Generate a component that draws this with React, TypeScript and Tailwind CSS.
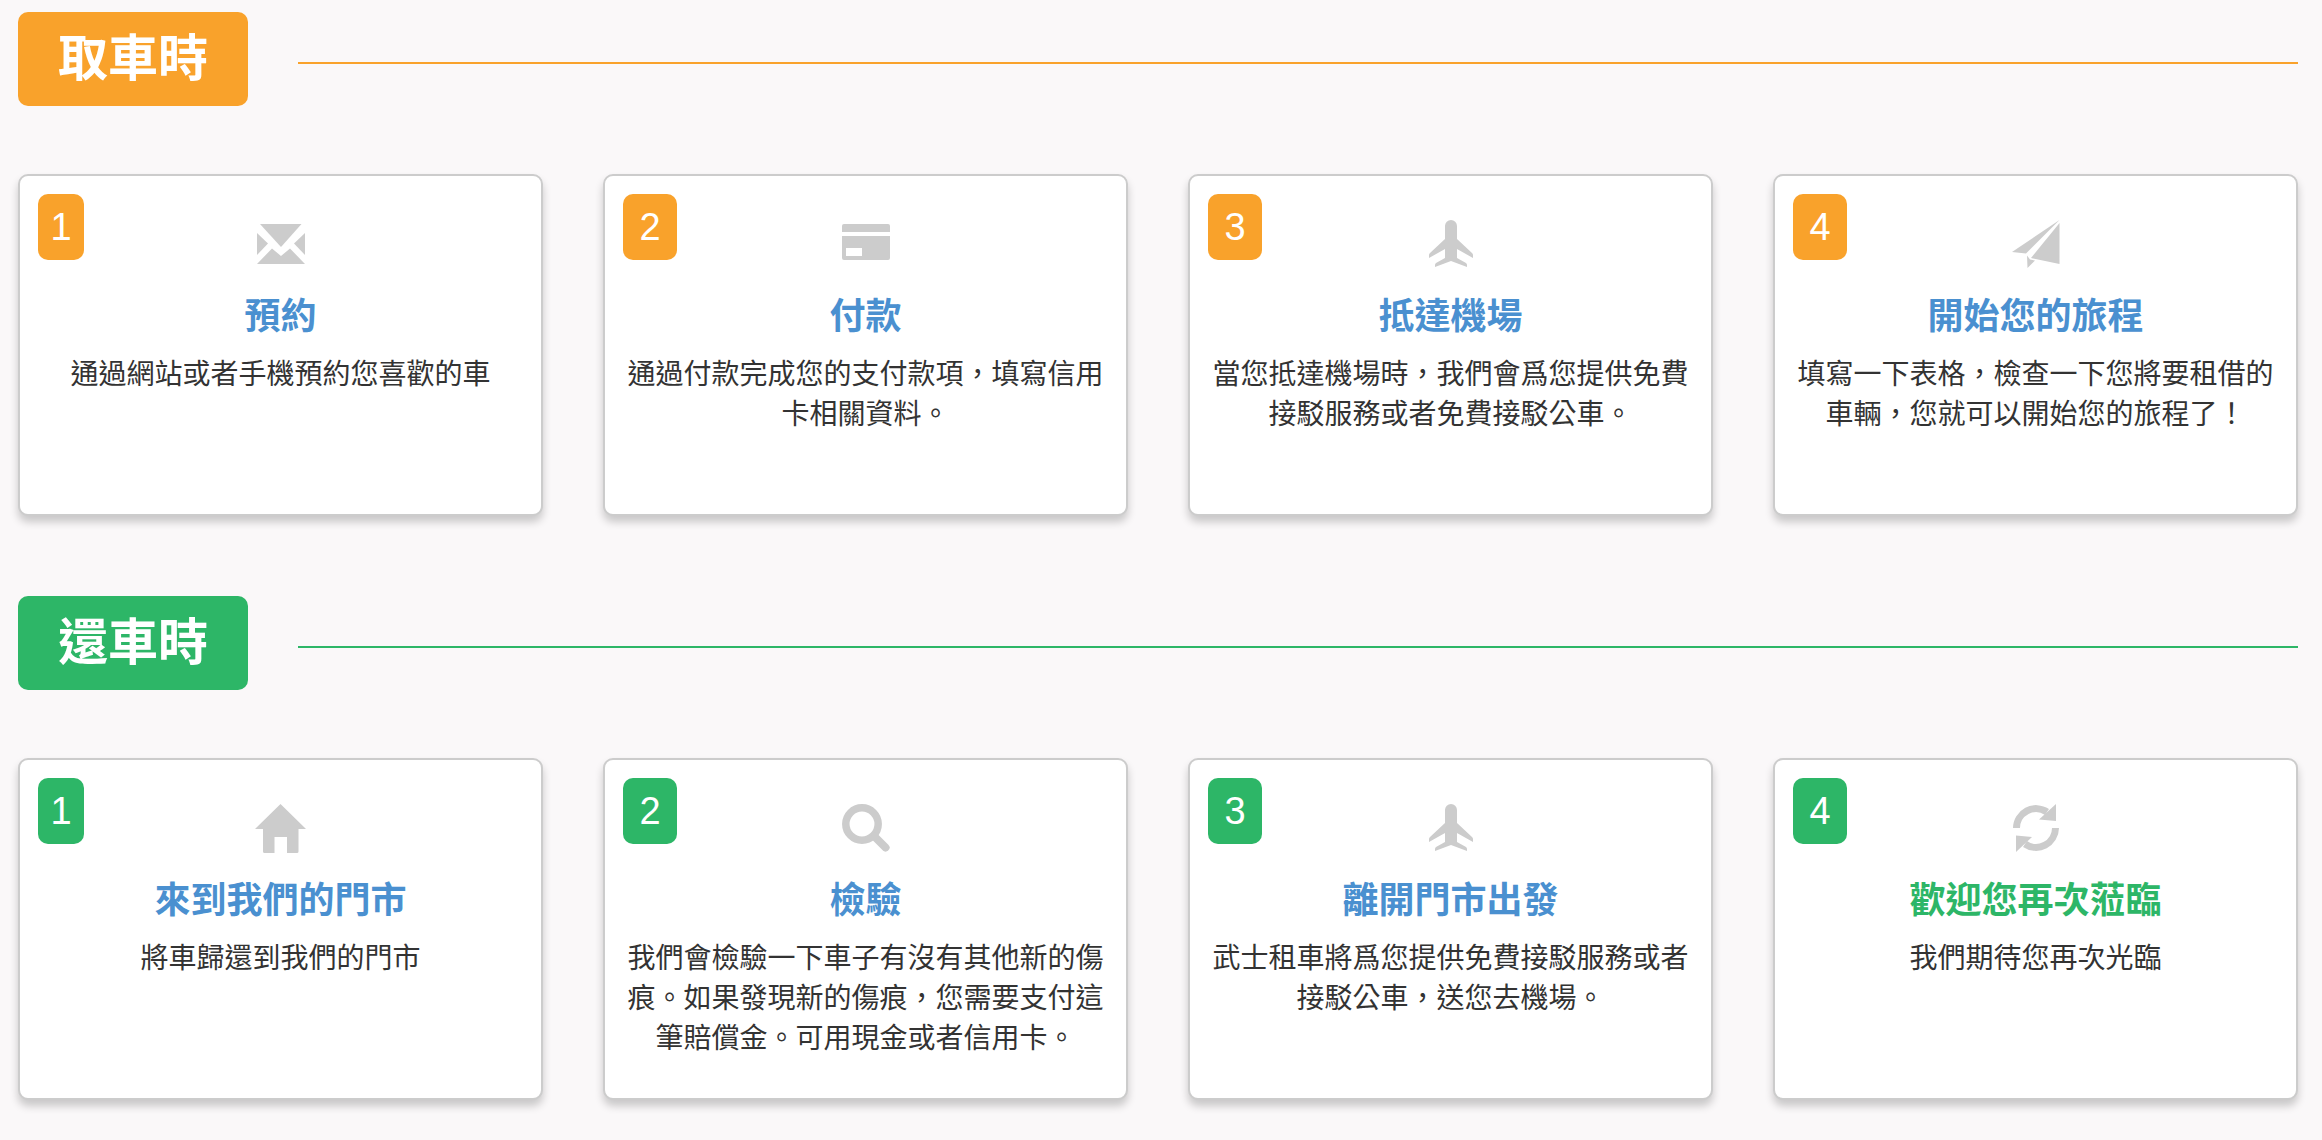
const font = { fontFamily: '"Liberation Sans", "Noto Sans CJK TC", sans-serif' };

const Envelope = () => (
  <svg width="48" height="48" viewBox="0 0 48 48" fill="#cccccc">
    <polygon points="3,4 44.5,4 24,27" />
    <polygon points="0,13 11,23.5 0,35" />
    <polygon points="48,13 37,23.5 48,35" />
    <polygon points="0,44 15,28.5 24,36 33,28.5 48,44" />
  </svg>
);
const CardIcon = () => (
  <svg width="48" height="48" viewBox="0 0 48 48" fill="#cccccc">
    <path d="M2 4h44a2 2 0 0 1 2 2v6H0V6a2 2 0 0 1 2-2z" />
    <path fillRule="evenodd" d="M0 16h48v22a2 2 0 0 1-2 2H2a2 2 0 0 1-2-2zM4 28v8h16v-8z" />
  </svg>
);
const Plane = () => (
  <svg width="44" height="48" viewBox="0 0 44 48" fill="#cccccc">
    <path d="M16 6a6 6 0 0 1 12 0V19L43 33Q44 34 44 35V38L28 29V38L37 43Q38 44 38 45V47L22 41L6 47V45Q6 44 7 43L16 38V29L0 38V35Q0 34 1 33L16 19Z" />
  </svg>
);
const Send = () => (
  <svg width="48" height="48" viewBox="0 0 48 48" fill="#cccccc">
    <polygon points="47.5,0 0,32 14,33.5" />
    <polygon points="47.5,3 19,38 47.5,44" />
    <polygon points="15,35.5 15.5,48 23,40.5 18,39.5" />
  </svg>
);
const Home = () => (
  <svg width="51" height="49" viewBox="0 0 51 49" fill="#cccccc">
    <path fillRule="evenodd" d="M25.5 0L51 25H43.5V47.5Q43.5 49 42 49H32V33H19.5V49H9.5Q8 49 8 47.5V25H0Z" />
  </svg>
);
const Search = () => (
  <svg width="48" height="48" viewBox="0 0 48 48" fill="none" stroke="#cccccc">
    <circle cx="20" cy="20" r="16.2" strokeWidth="7.5" />
    <line x1="33" y1="33" x2="43.5" y2="43.5" strokeWidth="8" strokeLinecap="round" />
  </svg>
);
const Refresh = () => (
  <svg width="46" height="48" viewBox="0 0 46 48">
    <g fill="none" stroke="#cccccc" strokeWidth="7">
      <path d="M3.5 24A19.5 19.5 0 0 1 34 8" />
      <path d="M42.5 24A19.5 19.5 0 0 1 12 40" />
    </g>
    <g fill="#cccccc">
      <polygon points="43,0 43,17 26,15.5" />
      <polygon points="3,48 3,31.5 19,33" />
    </g>
  </svg>
);

type Step = { n: string; icon: React.ReactNode; title: string; text: string; green?: boolean };

const pick: Step[] = [
  { n: "1", icon: <Envelope />, title: "預約", text: "通過網站或者手機預約您喜歡的車" },
  { n: "2", icon: <CardIcon />, title: "付款", text: "通過付款完成您的支付款項，填寫信用卡相關資料。" },
  { n: "3", icon: <Plane />, title: "抵達機場", text: "當您抵達機場時，我們會爲您提供免費接駁服務或者免費接駁公車。" },
  { n: "4", icon: <Send />, title: "開始您的旅程", text: "填寫一下表格，檢查一下您將要租借的車輛，您就可以開始您的旅程了！" },
];
const back: Step[] = [
  { n: "1", icon: <Home />, title: "來到我們的門市", text: "將車歸還到我們的門市" },
  { n: "2", icon: <Search />, title: "檢驗", text: "我們會檢驗一下車子有沒有其他新的傷痕。如果發現新的傷痕，您需要支付這筆賠償金。可用現金或者信用卡。" },
  { n: "3", icon: <Plane />, title: "離開門市出發", text: "武士租車將爲您提供免費接駁服務或者接駁公車，送您去機場。" },
  { n: "4", icon: <Refresh />, title: "歡迎您再次蒞臨", text: "我們期待您再次光臨", green: true },
];

function Card({ step, badge }: { step: Step; badge: string }) {
  return (
    <div className="relative flex h-[342px] flex-col items-center rounded-[10px] border-2 border-[#cccccc] bg-white px-[18px] pt-[44px] shadow-[0_6px_8px_rgba(0,0,0,0.2)]">
      <div
        className={`absolute left-[18px] top-[18px] flex h-[66px] items-center justify-center rounded-[10px] text-[38px] text-white ${badge} ${step.n === "1" ? "w-[46px]" : "w-[54px]"}`}
      >
        {step.n}
      </div>
      <div className="flex h-[48px] items-start justify-center">{step.icon}</div>
      <h3 className={`mt-[24px] text-center text-[36px] font-bold leading-[50px] ${step.green ? "text-[#2db667]" : "text-[#4a90d0]"}`}>
        {step.title}
      </h3>
      <p className="mt-[13px] text-center text-[28px] leading-[40px] text-[#333333]">{step.text}</p>
    </div>
  );
}

function Section({ label, badge, line, steps }: { label: string; badge: string; line: string; steps: Step[] }) {
  return (
    <section>
      <div className="flex items-center">
        <div className={`flex h-[94px] w-[230px] items-center justify-center rounded-[10px] text-[50px] font-bold text-white ${badge}`}>
          {label}
        </div>
        <div className={`ml-[50px] mt-[8px] h-[2px] flex-1 ${line}`} />
      </div>
      <div className="mt-[68px] grid grid-cols-4 gap-[60px]">
        {steps.map((s) => (
          <Card key={s.n} step={s} badge={badge} />
        ))}
      </div>
    </section>
  );
}

export default function App() {
  return (
    <div lang="zh-TW" style={font} className="min-h-[1140px] w-[2322px] bg-[#faf8f9] pl-[18px] pr-[24px] pt-[12px]">
      <div className="flex flex-col gap-[80px]">
        <Section label="取車時" badge="bg-[#f9a22b]" line="bg-[#f9a22b]" steps={pick} />
        <Section label="還車時" badge="bg-[#2db667]" line="bg-[#2db667]" steps={back} />
      </div>
    </div>
  );
}
